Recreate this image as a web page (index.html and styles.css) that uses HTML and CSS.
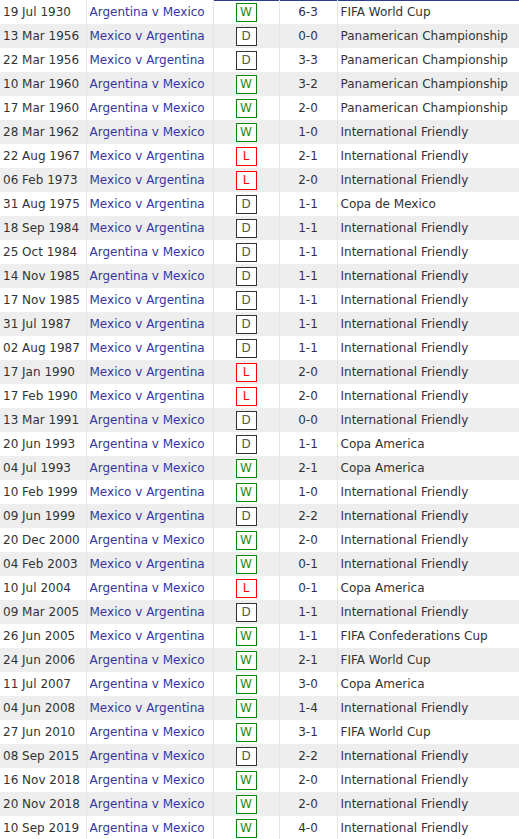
FILE: index.html
```html
<!DOCTYPE html>
<html lang="en">
<head>
    <meta charset="UTF-8">
    <meta name="viewport" content="width=device-width, initial-scale=1.0">
    <title>Argentina v Mexico - Head to Head</title>
    <link rel="stylesheet" href="styles.css">
</head>
<body>
    <table id="h2h">
        <colgroup>
            <col class="c-date">
            <col class="c-match">
            <col class="c-res">
            <col class="c-score">
            <col class="c-comp">
        </colgroup>
        <tbody>
            <tr class="first"><td>19 Jul 1930</td><td><a href="#">Argentina v Mexico</a></td><td class="res"><span class="badge w">W</span></td><td class="score">6-3</td><td>FIFA World Cup</td></tr>
            <tr><td>13 Mar 1956</td><td><a href="#">Mexico v Argentina</a></td><td class="res"><span class="badge d">D</span></td><td class="score">0-0</td><td>Panamerican Championship</td></tr>
            <tr><td>22 Mar 1956</td><td><a href="#">Mexico v Argentina</a></td><td class="res"><span class="badge d">D</span></td><td class="score">3-3</td><td>Panamerican Championship</td></tr>
            <tr><td>10 Mar 1960</td><td><a href="#">Argentina v Mexico</a></td><td class="res"><span class="badge w">W</span></td><td class="score">3-2</td><td>Panamerican Championship</td></tr>
            <tr><td>17 Mar 1960</td><td><a href="#">Argentina v Mexico</a></td><td class="res"><span class="badge w">W</span></td><td class="score">2-0</td><td>Panamerican Championship</td></tr>
            <tr><td>28 Mar 1962</td><td><a href="#">Argentina v Mexico</a></td><td class="res"><span class="badge w">W</span></td><td class="score">1-0</td><td>International Friendly</td></tr>
            <tr><td>22 Aug 1967</td><td><a href="#">Mexico v Argentina</a></td><td class="res"><span class="badge l">L</span></td><td class="score">2-1</td><td>International Friendly</td></tr>
            <tr><td>06 Feb 1973</td><td><a href="#">Mexico v Argentina</a></td><td class="res"><span class="badge l">L</span></td><td class="score">2-0</td><td>International Friendly</td></tr>
            <tr><td>31 Aug 1975</td><td><a href="#">Mexico v Argentina</a></td><td class="res"><span class="badge d">D</span></td><td class="score">1-1</td><td>Copa de Mexico</td></tr>
            <tr><td>18 Sep 1984</td><td><a href="#">Mexico v Argentina</a></td><td class="res"><span class="badge d">D</span></td><td class="score">1-1</td><td>International Friendly</td></tr>
            <tr><td>25 Oct 1984</td><td><a href="#">Argentina v Mexico</a></td><td class="res"><span class="badge d">D</span></td><td class="score">1-1</td><td>International Friendly</td></tr>
            <tr><td>14 Nov 1985</td><td><a href="#">Argentina v Mexico</a></td><td class="res"><span class="badge d">D</span></td><td class="score">1-1</td><td>International Friendly</td></tr>
            <tr><td>17 Nov 1985</td><td><a href="#">Mexico v Argentina</a></td><td class="res"><span class="badge d">D</span></td><td class="score">1-1</td><td>International Friendly</td></tr>
            <tr><td>31 Jul 1987</td><td><a href="#">Mexico v Argentina</a></td><td class="res"><span class="badge d">D</span></td><td class="score">1-1</td><td>International Friendly</td></tr>
            <tr><td>02 Aug 1987</td><td><a href="#">Mexico v Argentina</a></td><td class="res"><span class="badge d">D</span></td><td class="score">1-1</td><td>International Friendly</td></tr>
            <tr><td>17 Jan 1990</td><td><a href="#">Mexico v Argentina</a></td><td class="res"><span class="badge l">L</span></td><td class="score">2-0</td><td>International Friendly</td></tr>
            <tr><td>17 Feb 1990</td><td><a href="#">Mexico v Argentina</a></td><td class="res"><span class="badge l">L</span></td><td class="score">2-0</td><td>International Friendly</td></tr>
            <tr><td>13 Mar 1991</td><td><a href="#">Argentina v Mexico</a></td><td class="res"><span class="badge d">D</span></td><td class="score">0-0</td><td>International Friendly</td></tr>
            <tr><td>20 Jun 1993</td><td><a href="#">Argentina v Mexico</a></td><td class="res"><span class="badge d">D</span></td><td class="score">1-1</td><td>Copa America</td></tr>
            <tr><td>04 Jul 1993</td><td><a href="#">Argentina v Mexico</a></td><td class="res"><span class="badge w">W</span></td><td class="score">2-1</td><td>Copa America</td></tr>
            <tr><td>10 Feb 1999</td><td><a href="#">Mexico v Argentina</a></td><td class="res"><span class="badge w">W</span></td><td class="score">1-0</td><td>International Friendly</td></tr>
            <tr><td>09 Jun 1999</td><td><a href="#">Mexico v Argentina</a></td><td class="res"><span class="badge d">D</span></td><td class="score">2-2</td><td>International Friendly</td></tr>
            <tr><td>20 Dec 2000</td><td><a href="#">Argentina v Mexico</a></td><td class="res"><span class="badge w">W</span></td><td class="score">2-0</td><td>International Friendly</td></tr>
            <tr><td>04 Feb 2003</td><td><a href="#">Mexico v Argentina</a></td><td class="res"><span class="badge w">W</span></td><td class="score">0-1</td><td>International Friendly</td></tr>
            <tr><td>10 Jul 2004</td><td><a href="#">Argentina v Mexico</a></td><td class="res"><span class="badge l">L</span></td><td class="score">0-1</td><td>Copa America</td></tr>
            <tr><td>09 Mar 2005</td><td><a href="#">Mexico v Argentina</a></td><td class="res"><span class="badge d">D</span></td><td class="score">1-1</td><td>International Friendly</td></tr>
            <tr><td>26 Jun 2005</td><td><a href="#">Mexico v Argentina</a></td><td class="res"><span class="badge w">W</span></td><td class="score">1-1</td><td>FIFA Confederations Cup</td></tr>
            <tr><td>24 Jun 2006</td><td><a href="#">Argentina v Mexico</a></td><td class="res"><span class="badge w">W</span></td><td class="score">2-1</td><td>FIFA World Cup</td></tr>
            <tr><td>11 Jul 2007</td><td><a href="#">Argentina v Mexico</a></td><td class="res"><span class="badge w">W</span></td><td class="score">3-0</td><td>Copa America</td></tr>
            <tr><td>04 Jun 2008</td><td><a href="#">Mexico v Argentina</a></td><td class="res"><span class="badge w">W</span></td><td class="score">1-4</td><td>International Friendly</td></tr>
            <tr><td>27 Jun 2010</td><td><a href="#">Argentina v Mexico</a></td><td class="res"><span class="badge w">W</span></td><td class="score">3-1</td><td>FIFA World Cup</td></tr>
            <tr><td>08 Sep 2015</td><td><a href="#">Argentina v Mexico</a></td><td class="res"><span class="badge d">D</span></td><td class="score">2-2</td><td>International Friendly</td></tr>
            <tr><td>16 Nov 2018</td><td><a href="#">Argentina v Mexico</a></td><td class="res"><span class="badge w">W</span></td><td class="score">2-0</td><td>International Friendly</td></tr>
            <tr><td>20 Nov 2018</td><td><a href="#">Argentina v Mexico</a></td><td class="res"><span class="badge w">W</span></td><td class="score">2-0</td><td>International Friendly</td></tr>
            <tr><td>10 Sep 2019</td><td><a href="#">Argentina v Mexico</a></td><td class="res"><span class="badge w">W</span></td><td class="score">4-0</td><td>International Friendly</td></tr>
        </tbody>
    </table>
</body>
</html>
```

FILE: styles.css
```css
body {
    margin: 0;
    padding: 0;
    background: #fff;
    font-family: "DejaVu Sans", Verdana, sans-serif;
    font-size: 12px;
    color: #333;
}

#h2h {
    width: 519px;
    border-collapse: collapse;
    table-layout: fixed;
}

.c-date { width: 86px; }
.c-match { width: 127px; }
.c-res { width: 66px; }
.c-score { width: 58px; }
.c-comp { width: auto; }

#h2h td {
    height: 24px;
    padding: 0 3px;
    border-right: 1px solid #e4e4e4;
    white-space: nowrap;
    overflow: hidden;
    vertical-align: middle;
    box-sizing: border-box;
}

#h2h td:last-child {
    border-right: none;
}

#h2h tr:nth-child(even) td {
    background: #eeeeee;
}

#h2h tr.first td:nth-child(n+3) {
    box-shadow: inset 0 1px 0 #2b3f8f;
}

#h2h a {
    color: #3535a5;
    text-decoration: none;
}

#h2h td.res,
#h2h td.score {
    text-align: center;
}

.badge {
    display: inline-block;
    width: 21px;
    height: 19px;
    line-height: 17px;
    box-sizing: border-box;
    border: 1px solid #333;
    background: #fff;
    text-align: center;
    font-size: 12px;
    vertical-align: middle;
}

.badge.w {
    color: #1d8d1d;
    border-color: #0a860a;
}

.badge.d {
    color: #555;
    border-color: #333;
}

.badge.l {
    color: #f00;
    border-color: #f00;
}
```
